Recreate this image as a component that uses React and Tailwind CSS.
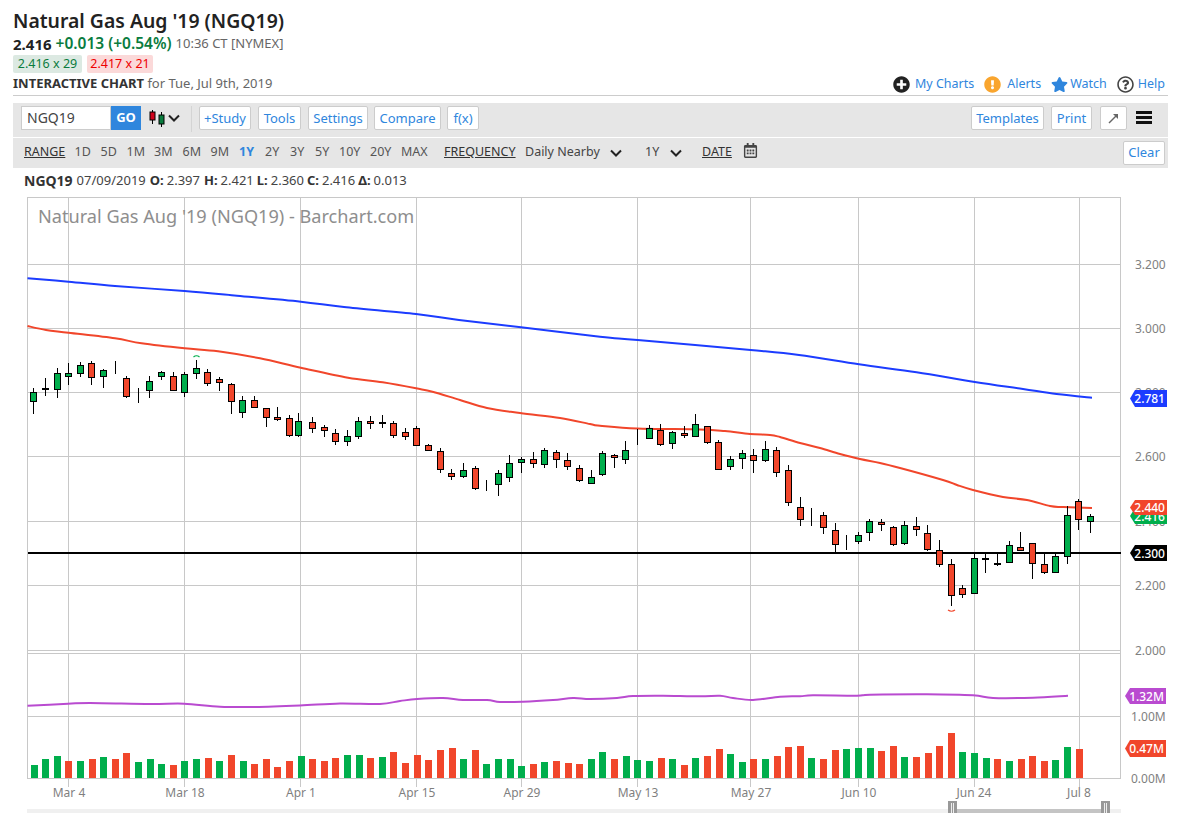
import React from "react";
import { FaPlusCircle, FaExclamationCircle, FaStar, FaRegQuestionCircle, FaRegCalendarAlt } from "react-icons/fa";

const GREEN = "#00ae4c";
const RED = "#f1462b";

// x, wick top, wick bottom, body top, body bottom, colour — read in 3x crops
const groups = [
  { ox: 0, oy: 340, c: [
    [100,145,221,157,187,"G"],[136,115,167,145,149,"K"],[172,85,173,100,151,"G"],[205,70,134,100,112,"G"],[241,66,112,76,103,"G"],
    [274,64,134,70,115,"R"],[310,88,143,91,112,"G"],[346,64,101,94,96,"K"],[379,109,173,115,172,"R"],[415,145,188,160,163,"K"],
    [448,109,173,124,154,"G"],[484,94,119,97,112,"G"],[520,97,154,109,154,"R"],[553,97,170,103,160,"G"],[589,61,116,85,103,"G"],
    [622,88,137,97,133,"R"],[658,112,152,118,130,"R"],[694,130,221,133,187,"R"],[727,169,233,181,220,"G"],[763,169,205,181,205,"R"],
    [799,205,260,205,235,"R"],[832,202,244,232,241,"R"],[868,226,292,235,289,"R"],
  ]},
  { ox: 300, oy: 400, c: [
    [-4,40,112,64,109,"G"],[37,52,98,67,88,"R"],[73,76,112,82,94,"R"],[106,88,134,100,127,"R"],[142,91,137,109,127,"G"],[175,52,116,64,112,"G"],
    [211,49,88,64,73,"R"],[247,46,85,67,73,"R"],[280,64,115,70,109,"R"],[316,85,119,97,112,"R"],[349,79,139,85,139,"R"],
    [385,133,154,136,154,"R"],[421,145,220,154,211,"R"],[454,208,241,220,232,"R"],[490,190,235,211,232,"G"],[526,199,271,205,268,"R"],
    [559,241,272,268,271,"K"],[595,211,287,220,256,"G"],[628,166,247,190,235,"G"],[664,172,220,178,190,"G"],[700,157,203,178,193,"R"],
    [733,145,205,151,196,"G"],[769,151,203,157,181,"R"],[802,160,211,181,202,"R"],[838,196,247,205,244,"R"],[874,211,253,232,253,"G"],
  ]},
  { ox: 600, oy: 400, c: [
    [7,154,229,160,226,"G"],[43,163,205,166,175,"R"],[76,124,193,151,181,"G"],[112,88,136,118,121,"K"],[148,76,118,85,118,"G"],
    [181,73,139,91,136,"R"],[217,94,148,97,133,"G"],[253,79,115,100,109,"R"],[286,43,112,73,112,"G"],[322,79,133,79,130,"R"],
    [355,121,211,127,211,"R"],[391,169,211,178,202,"G"],[427,151,208,160,178,"G"],[460,148,220,166,184,"R"],[496,124,187,148,184,"G"],
    [529,142,232,151,220,"R"],[565,196,319,211,310,"R"],[601,292,379,322,361,"R"],[634,325,379,349,352,"K"],[670,337,403,346,385,"R"],
    [706,370,457,391,436,"R"],[739,406,451,424,427,"K"],[775,397,433,406,427,"G"],[808,358,424,364,400,"G"],[844,358,394,367,376,"R"],
    [880,379,439,382,436,"R"],
  ]},
  { ox: 890, oy: 480, c: [
    [43,124,196,136,193,"G"],[79,112,169,139,151,"R"],[112,136,214,160,211,"R"],[148,181,262,211,256,"R"],[184,238,379,253,349,"R"],
    [217,316,355,325,346,"R"],[253,220,343,235,343,"G"],[286,220,280,235,241,"G"],[322,220,259,250,256,"G"],[358,184,250,196,250,"G"],
    [391,157,214,202,214,"R"],[427,190,298,190,253,"R"],[463,220,283,253,280,"R"],[496,223,280,229,280,"G"],[532,79,253,106,232,"G"],
    [565,58,151,64,121,"R"],[601,103,160,109,127,"G"],
  ]},
];

const volGroups = [
  { ox: 0, v: [[93,255,"G"],[126,237,"G"],[162,228,"G"],[195,243,"R"],[231,243,"G"],[267,237,"R"],[300,231,"G"],[336,237,"R"],[369,219,"R"],[405,246,"G"],[441,237,"G"],[474,252,"G"],[510,255,"R"],[543,243,"G"],[579,237,"G"],[615,234,"R"],[648,243,"G"],[684,225,"R"],[720,243,"G"],[753,252,"R"],[789,237,"R"],[822,261,"R"],[858,243,"R"],[894,228,"G"],[927,237,"R"],[963,243,"R"],[996,234,"R"],[1032,225,"G"],[1068,225,"G"],[1101,234,"R"],[1137,231,"G"],[1170,216,"R"]]},
  { ox: 400, v: [[6,249,"R"],[42,225,"R"],[75,240,"R"],[111,210,"R"],[147,204,"R"],[180,237,"G"],[216,210,"R"],[249,252,"G"],[285,237,"G"],[321,237,"G"],[354,258,"G"],[390,252,"R"],[423,246,"G"],[459,243,"R"],[495,249,"R"],[528,252,"R"],[564,237,"G"],[597,216,"G"],[633,237,"R"],[669,228,"G"],[702,240,"G"],[738,243,"G"],[774,234,"R"],[807,237,"G"],[843,255,"R"],[876,234,"G"],[912,228,"R"],[948,207,"R"],[981,222,"G"],[1017,246,"G"],[1050,237,"R"],[1086,237,"G"],[1122,228,"R"],[1155,201,"R"],[1191,198,"R"]]},
  { ox: 780, v: [[84,234,"G"],[120,237,"R"],[156,210,"R"],[189,207,"G"],[225,204,"G"],[261,204,"G"],[294,213,"R"],[330,198,"R"],[363,231,"G"],[399,231,"R"],[435,219,"R"],[468,198,"R"],[504,159,"R"],[537,216,"G"],[573,219,"G"],[609,234,"G"],[642,237,"R"],[678,243,"G"],[714,237,"R"],[747,228,"R"],[783,243,"R"],[816,240,"G"],[852,201,"G"],[888,207,"R"]]},
];

const blue = [[27.5,278.3],[68.5,281.7],[115,286],[184.5,291],[237,295.7],[300.8,301.7],[344,307],[416,314],[459,320],[521,327.3],[600,336.7],[637.6,340],[750.6,350],[799,355],[859,364.3],[916.6,372.3],[974.8,382],[1023,389],[1056.6,394],[1092,397.7]];
const red = [[27.5,326],[46,330],[68.5,332.7],[115,338.3],[141.6,343.3],[184.5,348.3],[218,351.3],[260,358.3],[300.8,367.7],[348,377.7],[382.7,382.3],[416,388.3],[432.5,391.7],[460,400],[487,408],[520,413],[560,418],[590,424],[600,425.7],[637,428.5],[700,429.5],[725,431],[750,434],[770,435],[780,437],[800,443],[820,448],[840,454],[860,459],[880,463],[900,468],[943,480],[957,485],[973,490],[1003,497],[1027,500],[1050,506],[1063,507],[1092,508]];
const purple = [[27.5,705.7],[68,703.7],[90,703],[150,704],[184,703.7],[220,706.7],[255,707],[300,705.5],[340,703.5],[380,704],[400,701],[417,699],[443,698],[463,700],[487,700],[500,702],[523,701.7],[553,700],[573,698],[590,699],[617,698],[633,696],[663,695.7],[700,696.3],[720,695.7],[733,698],[753,700],[780,696.7],[800,696.3],[813,695.3],[857,695.7],[870,694.7],[927,694.3],[973,695.3],[993,698],[1033,697.7],[1068,695.7]];

// smooth curve through sampled points (Catmull-Rom to Bezier)
function smooth(p) {
  let d = `M${p[0][0]},${p[0][1]}`;
  for (let i = 0; i < p.length - 1; i++) {
    const a = p[Math.max(i - 1, 0)], b = p[i], c = p[i + 1], e = p[Math.min(i + 2, p.length - 1)];
    d += ` C${(b[0] + (c[0] - a[0]) / 6).toFixed(1)},${(b[1] + (c[1] - a[1]) / 6).toFixed(1)} ${(c[0] - (e[0] - b[0]) / 6).toFixed(1)},${(c[1] - (e[1] - b[1]) / 6).toFixed(1)} ${c[0]},${c[1]}`;
  }
  return d;
}

const vGrid = [68.5, 184.5, 300.5, 416.5, 521.5, 637.5, 750.5, 858.5, 974.5, 1079.5];
const hGrid = [264.5, 328.5, 392.5, 456.5, 521.5, 585.5];
const dates = [["Mar 4",69],["Mar 18",185],["Apr 1",301],["Apr 15",417],["Apr 29",522],["May 13",638],["May 27",751],["Jun 10",859],["Jun 24",974],["Jul 8",1079]];
const yLabels = [["3.200",264],["3.000",328],["2.800",392],["2.600",456],["2.400",521],["2.200",585],["2.000",650]];

function Tag({ x, y, h = 16, w, fill, label }) {
  const t = y - h / 2;
  return (
    <g>
      <path d={`M${x},${y} L${x + 5},${t} H${x + w} V${t + h} H${x + 5} Z`} fill={fill} />
      <text x={x + w - 2} y={y + 4.5} textAnchor="end" fontSize="12" fill="#fff" fontWeight="500">{label}</text>
    </g>
  );
}

function Chart() {
  const gridC = "#c8c8c8";
  return (
    <svg className="block" width="1177" height="623" viewBox="0 190 1177 623" fontFamily="'Noto Sans', sans-serif">
      {/* grid */}
      {vGrid.map((x) => (
        <g key={x}>
          <line x1={x} x2={x} y1={197} y2={650.5} stroke={gridC} />
          <line x1={x} x2={x} y1={653.5} y2={787} stroke={gridC} />
        </g>
      ))}
      {hGrid.map((y) => <line key={y} x1={28} x2={1121} y1={y} y2={y} stroke={gridC} />)}
      <line x1={28} x2={1121} y1={197.5} y2={197.5} stroke={gridC} />
      <line x1={28} x2={1121} y1={650.5} y2={650.5} stroke={gridC} />
      <line x1={28} x2={1121} y1={653.5} y2={653.5} stroke={gridC} />
      <line x1={28} x2={1121} y1={716.5} y2={716.5} stroke={gridC} />
      <line x1={27.5} x2={27.5} y1={197} y2={779} stroke={gridC} />
      <line x1={1120.5} x2={1120.5} y1={197} y2={779} stroke={gridC} />

      <text x={38} y={223} fontSize="18.15" fill="#8e8e8e">Natural Gas Aug '19 (NGQ19) - Barchart.com</text>

      {/* y axis */}
      {yLabels.map(([t, y]) => (
        <text key={t} x={1135} y={y + 4.5} fontSize="12" fill="#7f7f7f">{t}</text>
      ))}
      <text x={1131} y={721} fontSize="12" fill="#7f7f7f">1.00M</text>
      <text x={1131} y={783} fontSize="12" fill="#7f7f7f">0.00M</text>

      {/* moving averages */}
      <path d={smooth(blue)} fill="none" stroke="#1c3cff" strokeWidth="2" />
      <path d={smooth(red)} fill="none" stroke={RED} strokeWidth="2" />
      <path d={smooth(purple)} fill="none" stroke="#b94bd0" strokeWidth="2" />

      {/* horizontal level */}
      <rect x={28} y={552} width={1093} height={2} fill="#000" />

      {/* candles */}
      <g shapeRendering="crispEdges">
        {groups.map((g) =>
          g.c.map(([x, wt, wb, bt, bb, col]) => {
            const cx = Math.floor(g.ox + x / 3) + 0.5;
            const top = Math.round(g.oy + bt / 3) + 0.5;
            const bot = Math.max(Math.round(g.oy + bb / 3) - 0.5, top);
            const fill = col === "G" ? GREEN : col === "R" ? RED : "#000";
            return (
              <g key={`${g.ox}-${x}`}>
                <line x1={cx} x2={cx} y1={g.oy + wt / 3} y2={g.oy + wb / 3} stroke="#000" />
                <rect x={cx - 3} y={top} width={6} height={bot - top} fill={fill} stroke="#000" />
              </g>
            );
          })
        )}
      </g>
      <path d="M193.5,357 Q196.5,354.5 199.5,357" fill="none" stroke={GREEN} strokeWidth="1.2" />
      <path d="M948,610 Q951.5,612.5 955,610" fill="none" stroke={RED} strokeWidth="1.2" />

      {/* volume */}
      <g shapeRendering="crispEdges">
        {volGroups.map((g) =>
          g.v.map(([x, t, col]) => {
            const y = Math.round(680 + t / 3);
            return <rect key={`${g.ox}-${x}`} x={Math.round(g.ox + x / 3)} y={y} width={7} height={778 - y} fill={col === "G" ? GREEN : RED} />;
          })
        )}
      </g>
      <line x1={28} x2={1121} y1={778.5} y2={778.5} stroke={gridC} />

      {/* tags */}
      <Tag x={1130} y={398.5} h={17} w={37} fill="#1c3cff" label="2.781" />
      <Tag x={1130} y={516} w={37} fill={GREEN} label="2.416" />
      <Tag x={1130} y={507.5} h={15} w={37} fill={RED} label="2.440" />
      <Tag x={1130} y={553} w={37} fill="#000" label="2.300" />
      <Tag x={1125} y={696} w={41} fill="#b94bd0" label="1.32M" />
      <Tag x={1125} y={748.5} h={17} w={41} fill={RED} label="0.47M" />

      {/* dates */}
      {dates.map(([t, x]) => (
        <text key={t} x={x} y={797} textAnchor="middle" fontSize="12" fill="#7f7f7f">{t}</text>
      ))}

      {/* range scroller */}
      <rect x={27} y={809} width={1094} height={4} fill="#f0f0f0" />
      <rect x={952} y={809} width={153} height={4} fill="#c4c4c4" />
      <g shapeRendering="crispEdges">
        <rect x={948} y={801} width={9} height={12} fill="#999" />
        <rect x={951} y={803} width={1} height={10} fill="#eee" />
        <rect x={953} y={803} width={1} height={10} fill="#eee" />
        <rect x={1101} y={801} width={9} height={12} fill="#999" />
        <rect x={1104} y={803} width={1} height={10} fill="#eee" />
        <rect x={1106} y={803} width={1} height={10} fill="#eee" />
      </g>
    </svg>
  );
}

function CandleIcon() {
  return (
    <svg width="16" height="18" viewBox="0 0 16 18">
      <line x1="3.5" x2="3.5" y1="1" y2="15" stroke="#000" />
      <rect x="1" y="3" width="5" height="8" fill="#d0021b" stroke="#000" />
      <line x1="12.5" x2="12.5" y1="3" y2="18" stroke="#000" />
      <rect x="10" y="6" width="5" height="9" fill="#0a7c3e" stroke="#000" />
    </svg>
  );
}

function Chevron() {
  return (
    <svg width="12" height="8" viewBox="0 0 12 8">
      <path d="M1 1.5 L6 6.5 L11 1.5" fill="none" stroke="#222" strokeWidth="2" />
    </svg>
  );
}

const btn = "h-[24px] pt-[1px] flex items-center justify-center bg-white border border-[#ccc] rounded-[2px] text-[#2f86dd] text-[13px]";

export default function App() {
  return (
    <div className="w-[1177px] h-[813px] overflow-hidden bg-white font-['Noto_Sans',sans-serif] text-[#333]">
      <div className="pl-[13px] pr-[9px] pt-[8px]">
        <h1 className="text-[19.4px] leading-[26px] font-semibold text-[#222]">Natural Gas Aug '19 (NGQ19)</h1>
        <div className="h-[20px] flex items-center whitespace-nowrap">
          <span className="text-[15px] font-bold text-[#222]">2.416</span>
          <span className="text-[15.5px] font-semibold text-[#0a7c3e] ml-[4px]">+0.013 (+0.54%)</span>
          <span className="text-[13px] text-[#666] ml-[4px]">10:36 CT [NYMEX]</span>
        </div>
        <div className="flex gap-[5px] h-[18px] mt-[1px] text-[12.5px] leading-[18px]">
          <span className="w-[69px] text-center bg-[#dce9e2] text-[#0a7c3e] rounded-[2px]">2.416 x 29</span>
          <span className="w-[66px] text-center bg-[#fbd9d9] text-[#e00] rounded-[2px]">2.417 x 21</span>
        </div>
        <div className="h-[23px] flex items-center justify-between border-b border-[#ccc] pr-[3px]">
          <div className="text-[13px] whitespace-nowrap">
            <span className="font-bold text-[#333]">INTERACTIVE CHART</span>
            <span className="text-[#666]"> for Tue, Jul 9th, 2019</span>
          </div>
          <div className="flex items-center text-[12.5px] text-[#2f86dd]">
            <FaPlusCircle className="text-[17px] text-[#222]" />
            <span className="ml-[5px]">My Charts</span>
            <FaExclamationCircle className="text-[17px] text-[#f9a52e] ml-[10px]" />
            <span className="ml-[6px]">Alerts</span>
            <FaStar className="text-[17px] text-[#2f86dd] ml-[10px]" />
            <span className="ml-[2px]">Watch</span>
            <FaRegQuestionCircle className="text-[17px] text-[#444] ml-[10px]" />
            <span className="ml-[4px]">Help</span>
          </div>
        </div>
        <div className="mt-[7px] h-[34px] w-[1155px] bg-[#e6e6e6] flex items-start pt-[3px] pl-[8px] pr-[16px]">
          <div className="w-[90px] h-[24px] bg-white border border-[#ccc] pl-[5px] text-[14px] leading-[22px] text-[#444]">NGQ19</div>
          <div className="w-[30px] h-[24px] bg-[#2f86dd] text-white text-[13px] font-bold flex items-center justify-center">GO</div>
          <div className="ml-[8px] mt-[3px]"><CandleIcon /></div>
          <div className="ml-[3px] mt-[8px]"><Chevron /></div>
          <div className="ml-[11px] w-px h-[26px] bg-[#d4d4d4]"></div>
          <button className={`${btn} w-[52px] ml-[7px]`}>+Study</button>
          <button className={`${btn} w-[43px] ml-[7px]`}>Tools</button>
          <button className={`${btn} w-[60px] ml-[7px]`}>Settings</button>
          <button className={`${btn} w-[67px] ml-[6px]`}>Compare</button>
          <button className={`${btn} w-[32px] ml-[6px]`}>f(x)</button>
          <button className={`${btn} w-[73px] ml-auto`}>Templates</button>
          <button className={`${btn} w-[41px] ml-[7px]`}>Print</button>
          <button className={`${btn} w-[27px] ml-[8px]`}>
            <svg width="11" height="11" viewBox="0 0 11 11">
              <path d="M1 10 L8 3" fill="none" stroke="#666" strokeWidth="1.5" />
              <path d="M5 1 H10 V6 Z" fill="#666" />
            </svg>
          </button>
          <div className="ml-[9px] mt-[5px] w-[16px] flex flex-col gap-[2px]">
            <div className="h-[3px] bg-[#111]"></div>
            <div className="h-[3px] bg-[#111]"></div>
            <div className="h-[3px] bg-[#111]"></div>
          </div>
        </div>
        <div className="mt-[1px] h-[30px] pb-[1px] w-[1155px] bg-[#e6e6e6] flex items-center pl-[11px] pr-[3px] text-[12.5px] text-[#555] whitespace-nowrap">
          <span className="w-[50.5px] underline text-[#333]">RANGE</span>
          <span className="w-[26px]">1D</span>
          <span className="w-[26px]">5D</span>
          <span className="w-[27.5px]">1M</span>
          <span className="w-[28.5px]">3M</span>
          <span className="w-[28px]">6M</span>
          <span className="w-[28.5px]">9M</span>
          <span className="w-[26px] font-bold text-[#2f86dd]">1Y</span>
          <span className="w-[25px]">2Y</span>
          <span className="w-[25px]">3Y</span>
          <span className="w-[24px]">5Y</span>
          <span className="w-[31px]">10Y</span>
          <span className="w-[31px]">20Y</span>
          <span className="w-[43px]">MAX</span>
          <span className="w-[81px] underline text-[#333]">FREQUENCY</span>
          <span className="w-[85px] text-[#444]">Daily Nearby</span>
          <span className="w-[35px]"><Chevron /></span>
          <span className="w-[25px] text-[#444]">1Y</span>
          <span className="w-[32px]"><Chevron /></span>
          <span className="w-[41px] underline text-[#333]">DATE</span>
          <FaRegCalendarAlt className="text-[15px] text-[#444] mb-[4px]" />
          <button className={`${btn} w-[42px] ml-auto`}>Clear</button>
        </div>
        <div className="h-[22px] pl-[11px] pt-[3px] flex items-center whitespace-nowrap text-[13px]">
          <span className="text-[14px] font-bold text-[#333]">NGQ19</span>
          <span className="ml-[4px] text-[#444]">07/09/2019</span>
          <span className="ml-[4px] font-bold">O:</span>
          <span className="ml-[3px] text-[#444]">2.397</span>
          <span className="ml-[4px] font-bold">H:</span>
          <span className="ml-[3px] text-[#444]">2.421</span>
          <span className="ml-[3px] font-bold">L:</span>
          <span className="ml-[3px] text-[#444]">2.360</span>
          <span className="ml-[3px] font-bold">C:</span>
          <span className="ml-[3px] text-[#444]">2.416</span>
          <span className="ml-[3px] font-bold">Δ:</span>
          <span className="ml-[3px] text-[#444]">0.013</span>
        </div>
      </div>
      <Chart />
    </div>
  );
}
